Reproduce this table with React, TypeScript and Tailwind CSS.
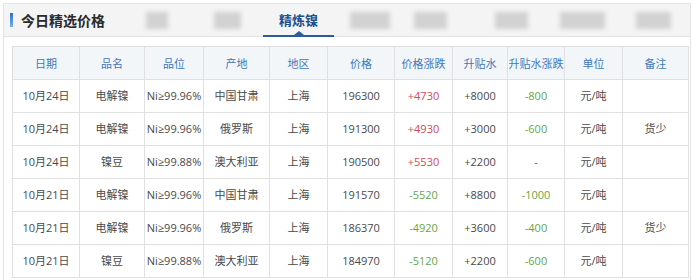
const rows = [
  { date: '10月24日', name: '电解镍', grade: 'Ni≥99.96%', origin: '中国甘肃', area: '上海', price: '196300', chg: '+4730', prem: '+8000', premChg: '-800', unit: '元/吨', note: '' },
  { date: '10月24日', name: '电解镍', grade: 'Ni≥99.96%', origin: '俄罗斯', area: '上海', price: '191300', chg: '+4930', prem: '+3000', premChg: '-600', unit: '元/吨', note: '货少' },
  { date: '10月24日', name: '镍豆', grade: 'Ni≥99.88%', origin: '澳大利亚', area: '上海', price: '190500', chg: '+5530', prem: '+2200', premChg: '-', unit: '元/吨', note: '' },
  { date: '10月21日', name: '电解镍', grade: 'Ni≥99.96%', origin: '中国甘肃', area: '上海', price: '191570', chg: '-5520', prem: '+8800', premChg: '-1000', unit: '元/吨', note: '' },
  { date: '10月21日', name: '电解镍', grade: 'Ni≥99.96%', origin: '俄罗斯', area: '上海', price: '186370', chg: '-4920', prem: '+3600', premChg: '-400', unit: '元/吨', note: '货少' },
  { date: '10月21日', name: '镍豆', grade: 'Ni≥99.88%', origin: '澳大利亚', area: '上海', price: '184970', chg: '-5120', prem: '+2200', premChg: '-600', unit: '元/吨', note: '' },
]

const headers = ['日期', '品名', '品位', '产地', '地区', '价格', '价格涨跌', '升贴水', '升贴水涨跌', '单位', '备注']
const widths = ['w-[67px]', 'w-[65px]', 'w-[59px]', 'w-[66px]', 'w-[58px]', 'w-[67px]', 'w-[58px]', 'w-[55px]', 'w-[57px]', 'w-[58px]', 'w-[66px]']

// blurred tab labels, one per slot (size and nudge of the smudge)
const blurTabs = ['w-[22px]', 'w-[27px]', null, 'w-[40px]', 'w-[33px] mr-[20px]', 'w-[33px]', 'w-[45px]', 'w-[35px]']

function changeColor(v: string) {
  if (v.startsWith('+')) return 'text-[#d2475d]'
  if (v.startsWith('-') && v.length > 1) return 'text-[#65a64c]'
  return 'text-[#555]'
}

export default function App() {
  return (
    <div className="w-[692px] h-[280px] overflow-hidden bg-white pt-[3px] pl-[3px] font-['Open_Sans','Noto_Sans_CJK_SC',sans-serif]">
      <div className="w-[688px] h-[300px] border border-[#e4e4e4]">
        {/* Header band */}
        <div className="flex h-[33px] items-center bg-[#f4f4f4] border-b border-[#e2e2e2]">
          <div className="flex w-[117px] items-center pl-[6px]">
            <span className="block w-[3px] h-[14px] bg-gradient-to-b from-[#2b6fd0] to-[#79aee8]" />
            <span className="ml-[8px] text-[14px] font-bold text-[#2a2a2a] font-['Noto_Sans_CJK_SC',sans-serif]">今日精选价格</span>
          </div>
          <div className="flex h-full">
            {blurTabs.map((w, i) =>
              w === null ? (
                <div key={i} className="relative flex w-[71px] h-full items-center justify-center">
                  <span className="text-[13px] font-bold text-[#1d4f8f] font-['Noto_Sans_CJK_SC',sans-serif]">精炼镍</span>
                  <span className="absolute left-0 right-0 -bottom-[1px] h-[2px] bg-[#2c5b9c]" />
                  <span className="absolute left-1/2 -translate-x-1/2 bottom-[1px] w-0 h-0 border-x-[5px] border-x-transparent border-b-[4px] border-b-[#2c5b9c]" />
                </div>
              ) : (
                <div key={i} className="flex w-[71px] h-full items-center justify-center">
                  <span className={`block ${w} h-[17px] bg-[#d2d2d2] blur-[2px]`} />
                </div>
              )
            )}
          </div>
        </div>

        {/* Table */}
        <div className="mt-[9px] ml-[8px] w-[677px] border-l border-t border-[#e0e0e0]">
          <div className="flex h-[33px] bg-[#f3f6f9]">
            {headers.map((h, i) => (
              <div key={h} className={`${widths[i]} flex items-center justify-center border-r border-b border-[#e0e0e0] text-[11px] text-[#4078bb] font-['Noto_Sans_CJK_SC',sans-serif]`}>
                {h}
              </div>
            ))}
          </div>
          {rows.map((r, ri) => {
            const cells = [r.date, r.name, r.grade, r.origin, r.area, r.price, r.chg, r.prem, r.premChg, r.unit, r.note]
            return (
              <div key={ri} className="flex h-[33px]">
                {cells.map((c, ci) => (
                  <div
                    key={ci}
                    className={`${widths[ci]} flex items-center justify-center border-r border-b border-[#e0e0e0] text-[11px] ${
                      ci === 6 || ci === 8 ? changeColor(c) : 'text-[#4a4a4a]'
                    }`}
                  >
                    {c}
                  </div>
                ))}
              </div>
            )
          })}
        </div>
      </div>
    </div>
  )
}
